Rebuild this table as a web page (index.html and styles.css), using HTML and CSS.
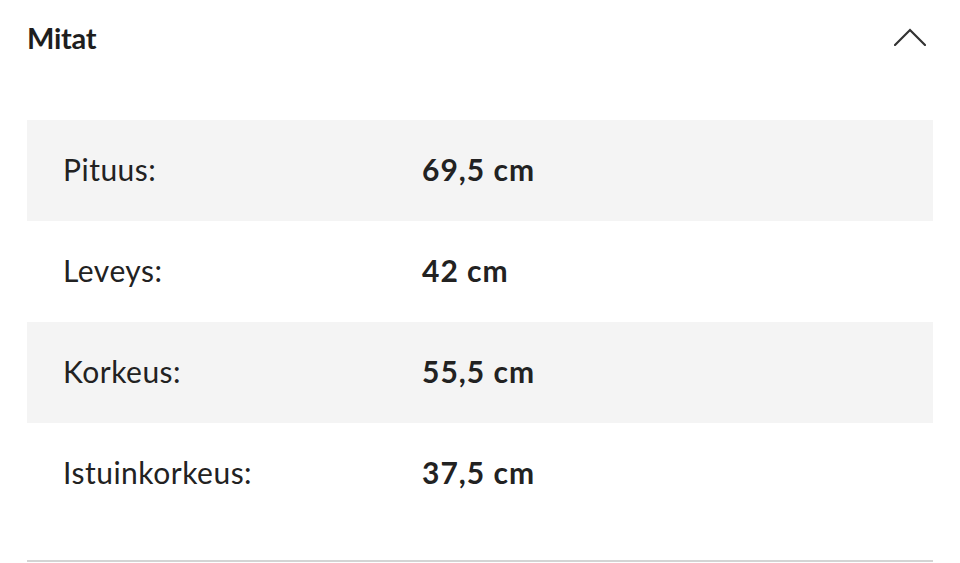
FILE: index.html
```html
<!DOCTYPE html>
<html lang="fi">
<head>
<meta charset="utf-8">
<link rel="stylesheet" href="styles.css">
</head>
<body>
<section class="panel">
  <div class="panel-head">
    <h2 class="panel-title">Mitat</h2>
    <svg class="chevron" width="32" height="18" viewBox="0 0 32 18" aria-hidden="true">
      <polyline points="1,17 16,2 31,17" fill="none" stroke="#333" stroke-width="2.2" stroke-linecap="round" stroke-linejoin="miter"/>
    </svg>
  </div>
  <div class="spec-table">
    <div class="spec-row alt"><span class="spec-label">Pituus:</span><span class="spec-value">69,5 cm</span></div>
    <div class="spec-row"><span class="spec-label">Leveys:</span><span class="spec-value">42 cm</span></div>
    <div class="spec-row alt"><span class="spec-label">Korkeus:</span><span class="spec-value">55,5 cm</span></div>
    <div class="spec-row"><span class="spec-label">Istuinkorkeus:</span><span class="spec-value">37,5 cm</span></div>
  </div>
  <div class="divider"></div>
</section>
</body>
</html>
```
FILE: styles.css
```css
html, body {
  margin: 0;
  padding: 0;
  background: #fff;
}
body {
  font-family: Lato, "Liberation Sans", sans-serif;
  color: #222;
}
.panel {
  padding: 0 27px;
}
.panel-head {
  height: 80px;
  display: flex;
  align-items: center;
  justify-content: space-between;
  margin-bottom: 40px;
}
.panel-title {
  margin: 0;
  font-size: 29px;
  font-weight: 700;
  letter-spacing: -0.3px;
  color: #1e1e1e;
  padding-bottom: 5px;
}
.chevron {
  margin-right: 7px;
  margin-bottom: 6px;
}
.spec-table {
  display: flex;
  flex-direction: column;
}
.spec-row {
  height: 101px;
  box-sizing: border-box;
  display: flex;
  align-items: center;
  padding-left: 36px;
  padding-bottom: 4px;
  font-size: 30px;
}
.spec-row.alt {
  background: #f4f4f4;
}
.spec-label {
  width: 359px;
  font-weight: 400;
  letter-spacing: 0.5px;
}
.spec-value {
  font-weight: 700;
  letter-spacing: 1px;
}
.divider {
  margin-top: 36px;
  height: 2px;
  background: #d4d4d4;
}
```
